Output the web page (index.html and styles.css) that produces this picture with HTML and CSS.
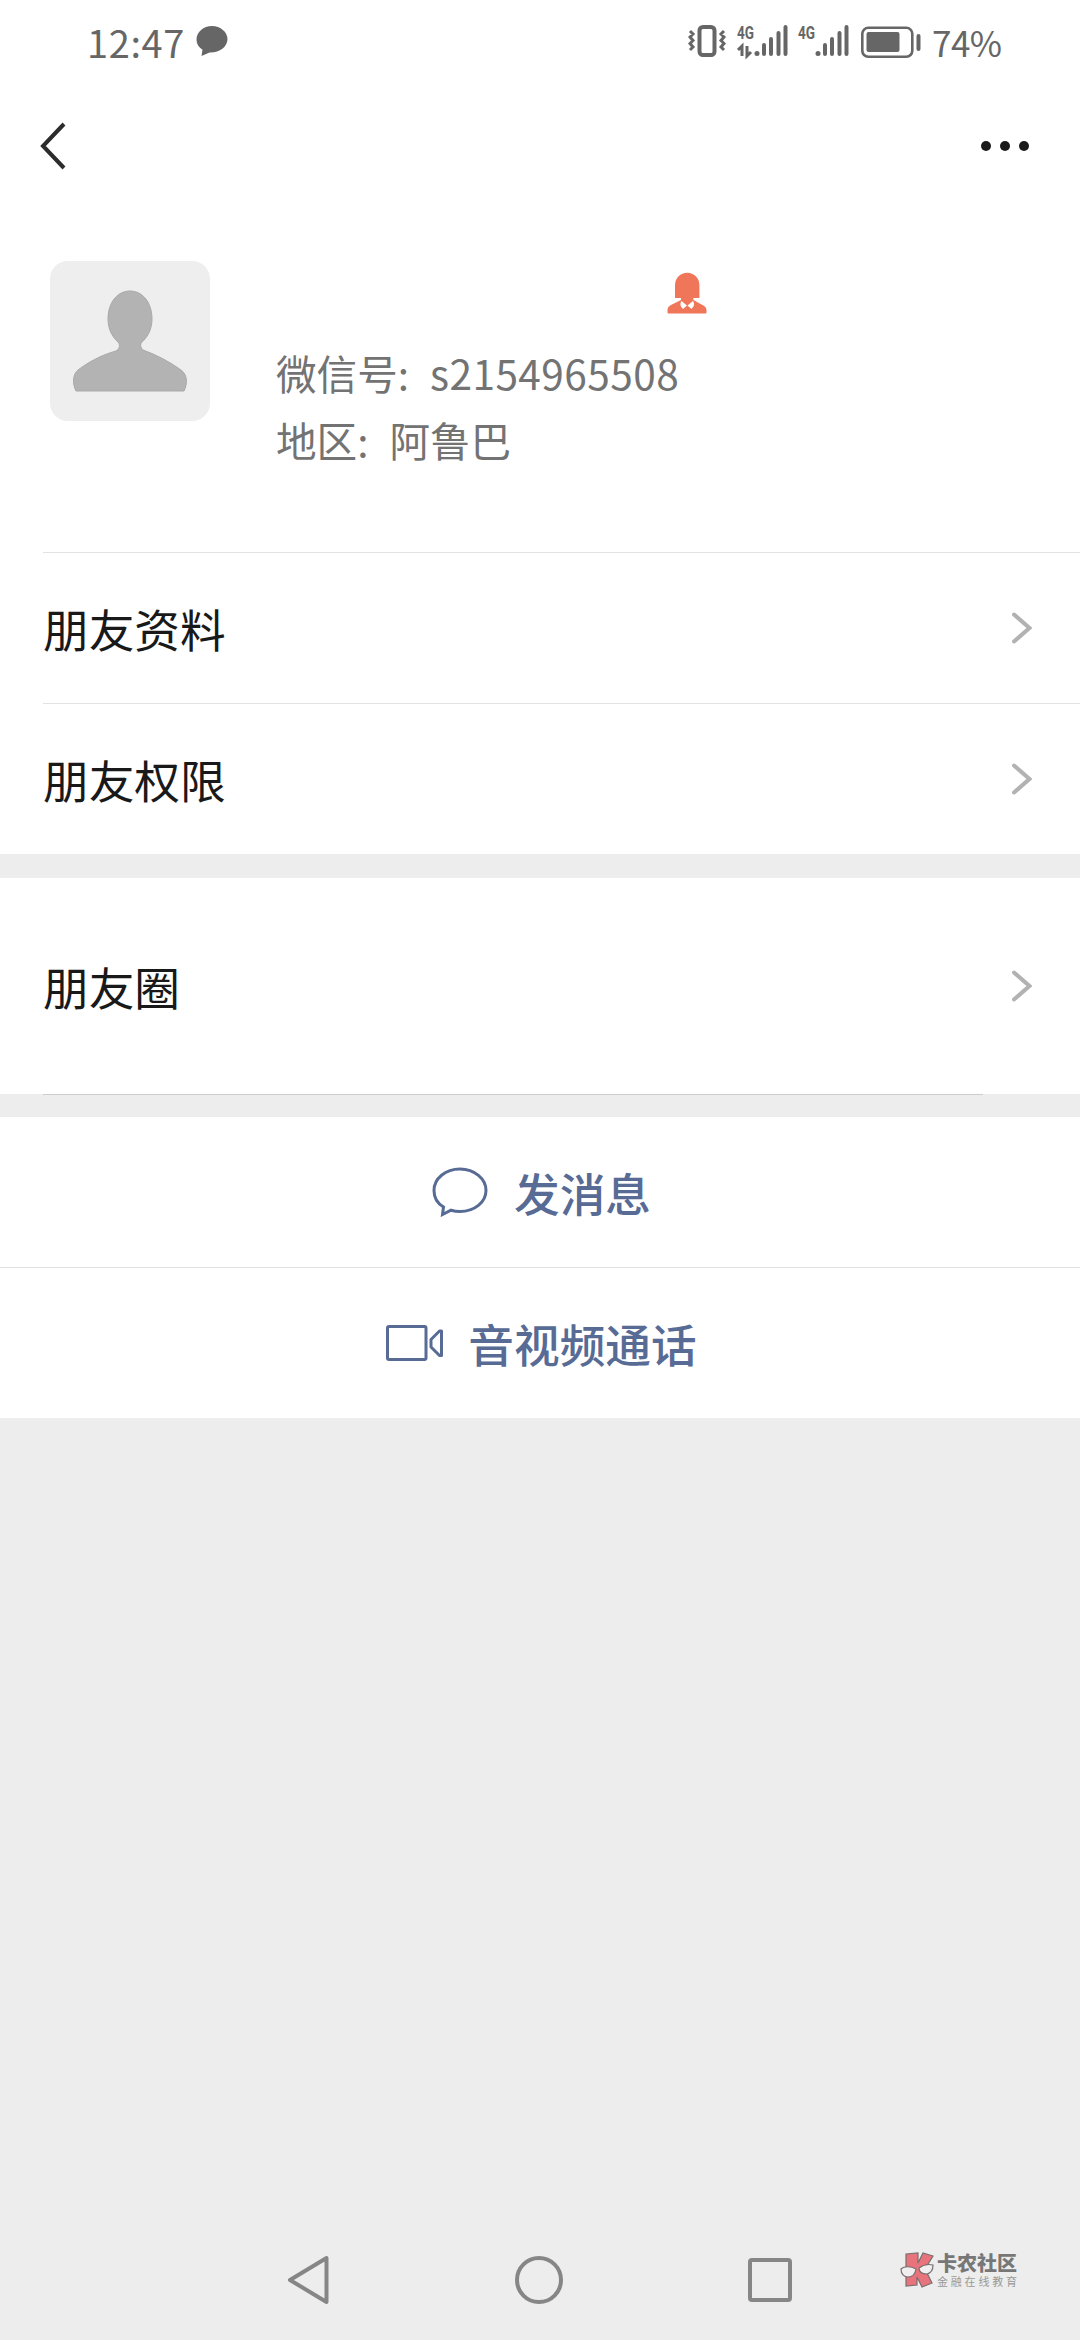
FILE: index.html
```html
<!DOCTYPE html>
<html lang="zh-CN">
<head>
  <meta charset="UTF-8">
  <title>朋友资料</title>
  <link rel="stylesheet" href="styles.css">
</head>
<body>
  <div class="status-bar">
    <span class="time">12:47</span>
    <svg class="chat-dot" width="32" height="32" viewBox="0 0 32 32">
      <path d="M16 1C7.500 1 .5 7 .5 14.500c0 4.500 2.300 8 6 10.300L5.500 31l8-3.500C23 28 31.500 22 31.500 14 31.500 7 24.500 1 16 1z" fill="#666"/>
    </svg>
    <div class="status-right">
      <svg width="38" height="32" viewBox="0 0 38 32" fill="none" stroke="#666">
        <rect x="11.500" y="2" width="15" height="28" rx="3.500" stroke-width="4"/>
        <path d="M2 6l3 3-3 3 3 3.500-3 3 3 3.500-3 3M36 6l-3 3 3 3-3 3.500 3 3-3 3.500 3 3" stroke-width="3"/>
      </svg>
      <svg class="signal" width="51" height="32" viewBox="0 0 51 32" fill="#666">
        <text x="0" y="14" class="net" textLength="17" lengthAdjust="spacingAndGlyphs">4G</text>
        <path d="M1 25l4-4v10M10 21v10l4-4" fill="none" stroke="#666" stroke-width="3"/>
        <circle cx="20" cy="28.500" r="2.500"/>
        <path d="M27 20v9M34 14v15M41.500 8v21M48.500 2v27" stroke="#666" stroke-width="4" stroke-linecap="round"/>
      </svg>
      <svg class="signal-2" width="51" height="32" viewBox="0 0 51 32" fill="#666">
        <text x="0" y="14" class="net" textLength="17" lengthAdjust="spacingAndGlyphs">4G</text>
        <circle cx="20" cy="28.500" r="2.500"/>
        <path d="M27 20v9M34 14v15M41.500 8v21M48.500 2v27" stroke="#666" stroke-width="4" stroke-linecap="round"/>
      </svg>
      <svg class="battery" width="61" height="33" viewBox="0 0 61 33">
        <rect x="1.300" y="1.800" width="50" height="29" rx="6" fill="none" stroke="#666" stroke-width="2.600"/>
        <rect x="5.500" y="6" width="33" height="20" rx="2" fill="#666"/>
        <rect x="55.500" y="8" width="4" height="17" rx="2" fill="#666"/>
      </svg>
      <span class="percent">74%</span>
    </div>
  </div>

  <div class="nav-bar">
    <svg width="26" height="48" viewBox="0 0 26 48">
      <path d="M24 2L3 24l21 22" fill="none" stroke="#2c2c2c" stroke-width="4"/>
    </svg>
    <svg width="50" height="12" viewBox="0 0 50 12" fill="#191919">
      <circle cx="6" cy="6" r="5"/>
      <circle cx="25" cy="6" r="5"/>
      <circle cx="44" cy="6" r="5"/>
    </svg>
  </div>

  <div class="profile">
    <svg class="avatar" width="160" height="160" viewBox="0 0 160 160">
      <path d="M80 30c-13 0-22 12-22 28 0 11 5 19 11 24 1 4 0 6-3 8-15 4-29 12-38 19-5 4-6 13-2 21h108c4-8 3-17-3-21-11-8-24-15-38-20-2-2-3-4-2-7 6-5 11-13 11-24 0-16-9-28-22-28z" fill="#b3b3b3" stroke="#a9a9a9" stroke-width="1"/>
    </svg>
    <div class="profile-info">
      <svg class="gender" width="40" height="42" viewBox="0 0 40 42">
        <path d="M8 26V13a12.200 12.200 0 0 1 24.400 0v13h-6v2l10 5.500c2 1.200 3.100 2.500 3.100 5V40c0 1-.5 1.500-1.500 1.500H2c-1 0-1.500-.5-1.500-1.500v-2c0-2 1-3.500 3-4.700L14 28v-2z" fill="#f0765a"/>
        <path d="M14.500 29c-2 3-1 5.500 1.500 8l4-3.500zM26 29c2 3 1 5.500-1.500 8l-4-3.500z" fill="#fff"/>
      </svg>
      <div class="detail">微信号:<span class="wxid">s2154965508</span></div>
      <div class="detail">地区:<span class="region">阿鲁巴</span></div>
    </div>
  </div>

  <div class="list">
    <div class="row">
      <span>朋友资料</span>
      <svg class="arrow" width="20" height="34" viewBox="0 0 20 34"><path d="M2 3.500l15.500 13.500L2 30.500"/></svg>
    </div>
    <div class="row">
      <span>朋友权限</span>
      <svg class="arrow" width="20" height="34" viewBox="0 0 20 34"><path d="M2 3.500l15.500 13.500L2 30.500"/></svg>
    </div>
  </div>

  <div class="moments">
    <span>朋友圈</span>
    <svg class="arrow" width="20" height="34" viewBox="0 0 20 34"><path d="M2 3.500l15.500 13.500L2 30.500"/></svg>
  </div>
  <div class="moments-line"></div>

  <div class="actions">
    <div class="action">
      <svg class="icon-msg" width="56" height="50" viewBox="0 0 56 50">
        <path d="M28 2C13.500 2 2 11.500 2 23.500c0 7 3.500 13 9.500 16.500L10.500 47.500l8.500-4.300c3 .9 6 1.300 9 1.300 14.500 0 26-9.300 26-21S42.500 2 28 2z"/>
      </svg>
      <span>发消息</span>
    </div>
    <div class="action">
      <svg class="icon-video" width="58" height="36" viewBox="0 0 58 36">
        <rect x="1.500" y="1.500" width="38.500" height="33" rx="1.500"/>
        <path d="M55.500 6h-2L45 14.500v7.500l8.500 8.500h2z" stroke-linejoin="round"/>
      </svg>
      <span>音视频通话</span>
    </div>
  </div>

  <div class="system-nav">
    <svg width="44" height="50" viewBox="0 0 44 50"><path d="M39.500 3L3 25l36.500 22z"/></svg>
    <svg width="50" height="50" viewBox="0 0 50 50"><circle cx="25" cy="25" r="22"/></svg>
    <svg width="46" height="46" viewBox="0 0 46 46"><rect x="3" y="3" width="40" height="40" rx="2"/></svg>
  </div>

  <div class="watermark">
    <svg width="36" height="36" viewBox="0 0 36 36">
      <path d="M6 2l12-1v10l5-10 10 3-8 13 7 14-10 4-5-10v8l-11 1z" fill="#e8737c" stroke="#77706f" stroke-width="1.200"/>
      <path d="M1 17c3-3 10-3 15 0-1 6-4 8-8 8s-7-3-7-8zM19 16c4-3 10-4 14-3 0 5-2 8-6 9-5 0-8-2-8-6z" fill="#f0eeee" stroke="#77706f" stroke-width="1.200"/>
    </svg>
    <div>
      <div class="brand">卡农社区</div>
      <div class="slogan">金融在线教育</div>
    </div>
  </div>
</body>
</html>
```
FILE: styles.css
```css
* {
  box-sizing: border-box;
}

body {
  margin: 0;
  width: 1080px;
  height: 2340px;
  display: flex;
  flex-direction: column;
  overflow: hidden;
  position: relative;
  background-color: #ededed;
  color: #191919;
  font-family: "Noto Sans CJK SC", sans-serif;
}

svg {
  display: block;
  flex-shrink: 0;
}

.status-bar {
  height: 82px;
  padding: 0 79px 0 87px;
  display: flex;
  align-items: center;
  background-color: #fff;
  color: #666;
}

.time {
  width: 109px;
  font-size: 38px;
  letter-spacing: 0.6px;
}

.status-right {
  margin-left: auto;
  display: flex;
  align-items: center;
}

.signal {
  margin-left: 11px;
}

.signal-2 {
  margin-left: 10px;
}

.signal,
.signal-2 {
  overflow: visible;
}

.net {
  font-family: "Roboto", sans-serif;
  font-size: 18px;
  font-weight: bold;
}

.battery {
  margin: 2px 0 0 12px;
}

.percent {
  width: 69px;
  margin-left: 10px;
  font-size: 35px;
  letter-spacing: -0.5px;
}

.nav-bar {
  height: 128px;
  padding: 0 50px 0 40px;
  display: flex;
  align-items: center;
  justify-content: space-between;
  background-color: #fff;
}

.profile {
  height: 342px;
  padding: 51px 50px 0;
  display: flex;
  align-items: flex-start;
  gap: 66px;
  background-color: #fff;
}

.avatar {
  border-radius: 18px;
  background-color: #eee;
}

.profile-info {
  padding-top: 11px;
}

.gender {
  margin: 0 0 25px 391px;
}

.detail {
  height: 67px;
  line-height: 67px;
  font-size: 40.6px;
  color: #737373;
  white-space: nowrap;
}

.wxid {
  margin-left: 21px;
  letter-spacing: 0.45px;
}

.region {
  margin-left: 21px;
}

.list {
  height: 302px;
  padding-left: 43px;
  background-color: #fff;
}

.row {
  height: 151px;
  padding-right: 48px;
  border-top: 1px solid #e3e3e3;
  display: flex;
  align-items: center;
  justify-content: space-between;
  font-size: 45.7px;
}

.arrow {
  fill: none;
  stroke: #b2b2b2;
  stroke-width: 4;
  stroke-linecap: round;
}

.moments {
  height: 216px;
  margin-top: 24px;
  padding: 0 48px 0 43px;
  display: flex;
  align-items: center;
  justify-content: space-between;
  background-color: #fff;
  font-size: 45.7px;
}

.moments-line {
  width: 940px;
  height: 1px;
  margin-left: 43px;
  background-color: #cdcdcd;
}

.actions {
  margin-top: 22px;
  background-color: #fff;
}

.action {
  height: 150px;
  padding-left: 3px;
  display: flex;
  align-items: center;
  justify-content: center;
  font-size: 45.7px;
  font-weight: 500;
  color: #576b95;
}

.action + .action {
  height: 151px;
  border-top: 1px solid #e0e0e0;
}

.icon-msg,
.icon-video {
  fill: none;
  stroke: #576b95;
  stroke-width: 3;
}

.icon-msg {
  margin-right: 26px;
}

.icon-video {
  margin-right: 24px;
}

.system-nav {
  margin-top: auto;
  height: 120px;
  padding: 0 287px;
  display: flex;
  align-items: center;
  justify-content: space-between;
  fill: none;
  stroke: #868686;
  stroke-width: 4;
  stroke-linejoin: round;
}

/* community mark in the corner */
.watermark {
  position: absolute;
  left: 900px;
  top: 2252px;
  display: flex;
  gap: 1px;
}

.brand {
  font-size: 20px;
  line-height: 22px;
  font-weight: 900;
  color: #777;
}

.slogan {
  font-size: 11px;
  line-height: 14px;
  letter-spacing: 2.8px;
  color: #999;
  white-space: nowrap;
}
```
